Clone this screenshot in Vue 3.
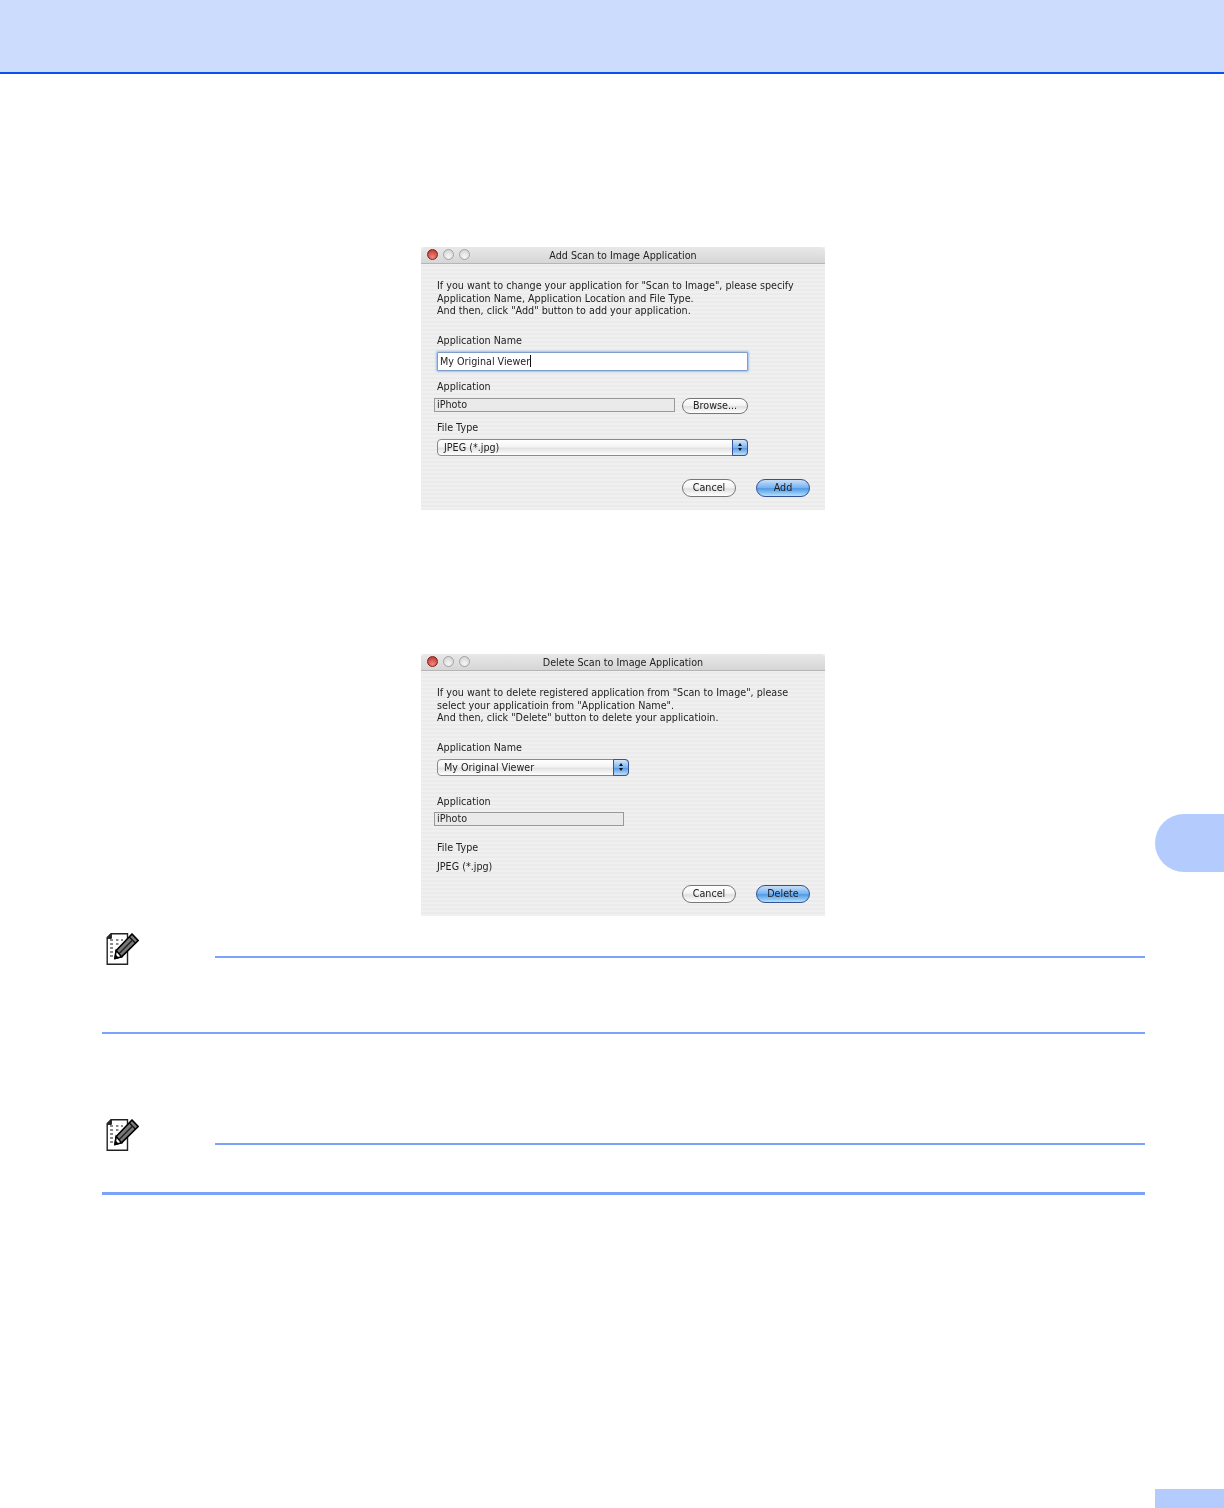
<script setup>
const addIntro = [
  'If you want to change your application for "Scan to Image", please specify',
  'Application Name, Application Location and File Type.',
  'And then, click "Add" button to add your application.',
]
const deleteIntro = [
  'If you want to delete registered application from "Scan to Image", please',
  'select your applicatioin from "Application Name".',
  'And then, click "Delete" button to delete your applicatioin.',
]
const notes = [
  { cls: 'note--first' },
  { cls: 'note--second' },
]
</script>

<template>
  <div class="page">
    <header class="top"></header>

    <main class="content">
      <section class="dialog dialog--add">
        <div class="titlebar">
          <span class="lights"><i class="light light--red"></i><i class="light"></i><i class="light"></i></span>
          <span class="title">Add Scan to Image Application</span>
        </div>
        <div class="body">
          <p class="intro"><span v-for="line in addIntro" :key="line">{{ line }}</span></p>
          <label class="label add-name">Application Name</label>
          <div class="input">My Original Viewer<i class="caret"></i></div>
          <label class="label add-app">Application</label>
          <div class="row">
            <div class="field field--wide">iPhoto</div>
            <button class="btn btn--browse">Browse...</button>
          </div>
          <label class="label add-type">File Type</label>
          <div class="select select--wide">
            <span>JPEG (*.jpg)</span>
            <i class="stepper"><b class="up"></b><b class="down"></b></i>
          </div>
          <div class="actions actions--add">
            <button class="btn">Cancel</button>
            <button class="btn btn--primary">Add</button>
          </div>
        </div>
      </section>

      <section class="dialog dialog--delete">
        <div class="titlebar">
          <span class="lights"><i class="light light--red"></i><i class="light"></i><i class="light"></i></span>
          <span class="title">Delete Scan to Image Application</span>
        </div>
        <div class="body">
          <p class="intro"><span v-for="line in deleteIntro" :key="line">{{ line }}</span></p>
          <label class="label add-name">Application Name</label>
          <div class="select select--narrow">
            <span>My Original Viewer</span>
            <i class="stepper"><b class="up"></b><b class="down"></b></i>
          </div>
          <label class="label del-app">Application</label>
          <div class="field field--narrow">iPhoto</div>
          <label class="label del-type">File Type</label>
          <div class="label del-value">JPEG (*.jpg)</div>
          <div class="actions actions--delete">
            <button class="btn">Cancel</button>
            <button class="btn btn--primary">Delete</button>
          </div>
        </div>
      </section>

      <aside v-for="note in notes" :key="note.cls" class="note" :class="note.cls">
        <div class="note-head">
          <svg class="note-icon" width="34" height="33" viewBox="0 0 34 33">
            <path d="M6 .7H22.5V31.3H2.2V4.5Z" fill="#fff" stroke="#222" stroke-width="1.4"/>
            <path d="M2.2 5.4 6.4 1V5.4Z" fill="#222" stroke="#222"/>
            <path d="M5 7h3M5 11h3M5 15h3M5 19h3M5 23h3M11 7h2.5M11 11h2.5M16 7h2" stroke="#8c8c8c" stroke-width="2"/>
            <path d="M27 1 33.2 7.5 16.5 23.8 10 25.5 11.2 17.5Z" fill="#777" stroke="#000" stroke-width="1.7" stroke-linejoin="round"/>
            <path d="M24.2 3.8 30.4 10.2" stroke="#000" stroke-width="1.2"/>
            <path d="M14.2 20.4 27.8 6.8" stroke="#222" stroke-width="1.4"/>
            <path d="M11.2 17.5 16.5 23.8 10 25.5Z" fill="#fff" stroke="#000" stroke-width="1.5"/>
            <path d="M10 25.5 10.8 21.8 13.6 24.4Z" fill="#000"/>
          </svg>
          <div class="note-rule"></div>
        </div>
      </aside>
    </main>

    <div class="chapter-tab"></div>
    <div class="page-tab"></div>
  </div>
</template>

<style>
html,
body {
  margin: 0;
  background: #fff;
}
</style>

<style scoped>
.page {
  position: relative;
  height: 1508px;
  overflow: hidden;
  background: #fff;
  font-family: "DejaVu Sans", sans-serif;
}

.top {
  height: 72px;
  background: #ccdcfd;
  border-bottom: 2px solid #0a50f0;
}

.content {
  display: flex;
  flex-direction: column;
  padding: 173px 79px 0 102px;
}

.dialog {
  align-self: flex-start;
  width: 404px;
  margin-left: 319px;
  background: repeating-linear-gradient(#f0f0f0 0 2px, #ebebeb 2px 4px);
  color: #222;
  font-size: 9.6px;
  filter: blur(0.35px);
}

.dialog--add {
  height: 263px;
}

.dialog--delete {
  height: 262px;
  margin-top: 144px;
}

.titlebar {
  position: relative;
  height: 16px;
  display: flex;
  align-items: center;
  justify-content: center;
  border-radius: 5px 5px 0 0;
  border-bottom: 1px solid #b5b5b5;
  background: linear-gradient(#e8e8e8, #d6d6d6);
}

.lights {
  position: absolute;
  left: 6px;
  top: 2px;
  display: flex;
  gap: 5px;
}

.light {
  width: 11px;
  height: 11px;
  box-sizing: border-box;
  border-radius: 50%;
  border: 1px solid #a3a3a3;
  background: radial-gradient(circle at 50% 75%, #f6f6f6, #cfcfcf);
}

.light--red {
  border-color: #7d1f1c;
  background: radial-gradient(circle at 50% 80%, #ee8a80, #bd2a24);
}

.body {
  display: flex;
  flex-direction: column;
  padding-left: 16px;
}

.intro {
  margin: 16px 0 0;
  display: flex;
  flex-direction: column;
  line-height: 12.5px;
}

.label {
  display: block;
  line-height: 12px;
}

.add-name {
  margin-top: 17px;
}

.add-app {
  margin-top: 10px;
}

.add-type {
  margin-top: 8px;
}

.input {
  display: flex;
  align-items: center;
  box-sizing: border-box;
  width: 311px;
  height: 19px;
  margin-top: 5px;
  padding-left: 2px;
  background: #fff;
  border: 1px solid #7d9fca;
  box-shadow: 0 0 2px 1px #9ac0ea;
  border-radius: 1px;
}

.caret {
  width: 1px;
  height: 12px;
  background: #111;
}

.row {
  display: flex;
  align-items: flex-start;
  gap: 7px;
  margin: 5px 0 0 -3px;
}

.field {
  box-sizing: border-box;
  height: 14px;
  padding-left: 2px;
  line-height: 12px;
  border: 1px solid #999;
  background: #eaeaea;
}

.field--wide {
  width: 241px;
}

.field--narrow {
  width: 190px;
  margin: 4px 0 0 -3px;
}

.select {
  display: flex;
  align-items: center;
  justify-content: space-between;
  box-sizing: border-box;
  height: 17px;
  padding-left: 6px;
  border: 1px solid #8a8a8a;
  border-radius: 4px;
  background: linear-gradient(#fff, #f4f4f4 45%, #e2e2e2 55%, #fff);
}

.select--wide {
  width: 311px;
  margin-top: 5px;
}

.select--narrow {
  width: 192px;
  margin-top: 5px;
}

.stepper {
  display: flex;
  flex-direction: column;
  align-items: center;
  justify-content: center;
  gap: 2px;
  width: 16px;
  height: 17px;
  margin-right: -1px;
  border-radius: 0 4px 4px 0;
  border: 1px solid #33539b;
  box-sizing: border-box;
  background: linear-gradient(#d6e8fb, #7cb4ee 50%, #5a9be6 55%, #c2e0f9);
}

.up,
.down {
  width: 0;
  height: 0;
  border-left: 2.5px solid transparent;
  border-right: 2.5px solid transparent;
}

.up {
  border-bottom: 3px solid #111;
}

.down {
  border-top: 3px solid #111;
}

.actions {
  display: flex;
  gap: 20px;
  margin-left: 245px;
}

.actions--add {
  margin-top: 23px;
}

.actions--delete {
  margin-top: 12px;
}

.btn {
  box-sizing: border-box;
  width: 54px;
  height: 18px;
  padding: 0;
  font: inherit;
  color: #222;
  border: 1px solid #777;
  border-radius: 9px;
  background: linear-gradient(#fff, #f4f4f4 45%, #e0e0e0 55%, #fff);
}

.btn--browse {
  width: 66px;
  height: 16px;
}

.btn--primary {
  border-color: #33528f;
  background: linear-gradient(#c9dff8, #78b3ef 48%, #4f9ae9 54%, #b4e0fb);
}

.del-app {
  margin-top: 20px;
}

.del-type {
  margin-top: 16px;
}

.del-value {
  margin-top: 7px;
}

.note {
  display: flex;
  flex-direction: column;
  border-bottom: 2px solid #7ba3fb;
}

.note--first {
  height: 99px;
  margin-top: 17px;
}

.note--second {
  height: 73px;
  margin-top: 85px;
  border-bottom-width: 3px;
}

.note-head {
  display: flex;
  align-items: flex-end;
}

.note-icon {
  flex: none;
  margin-left: 3px;
}

.note-rule {
  flex: 1;
  height: 2px;
  margin: 0 0 8px 76px;
  background: #7ba3fb;
}

.note--second .note-rule {
  margin-bottom: 7px;
}

.chapter-tab {
  position: absolute;
  right: 0;
  top: 814px;
  width: 69px;
  height: 58px;
  border-radius: 29px 0 0 29px;
  background: #b3cbfd;
}

.page-tab {
  position: absolute;
  right: 0;
  bottom: 0;
  width: 69px;
  height: 19px;
  background: #b3cbfd;
}
</style>
